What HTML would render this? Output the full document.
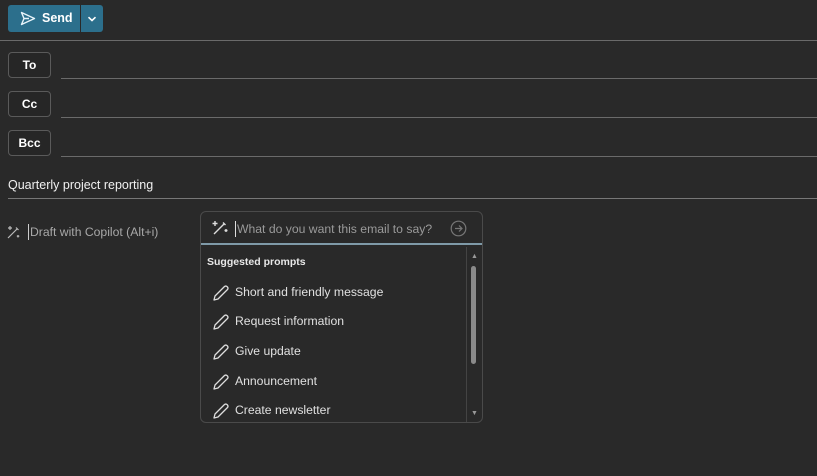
<!DOCTYPE html><html><head><style>
body{margin:0;width:817px;height:476px;background:#292929;font-family:"Liberation Sans",sans-serif;color:#e8e8e8;position:relative;overflow:hidden}
.a{position:absolute}
.btn{position:absolute;left:8px;width:43px;height:25px;border:1px solid #5a5a5a;border-radius:4px;box-sizing:border-box;font-size:12px;font-weight:bold;text-align:center;line-height:24px;color:#fff;background:#262626}
.ln{position:absolute;height:1px;background:#6a6a6a}
.it{position:absolute;left:235px;font-size:12.2px;color:#e0e0e0}
.pen{position:absolute;left:212px}
</style></head><body>
<div class="a" style="left:8px;top:5px;width:72px;height:27px;background:#2c6f8c;border-radius:3px 0 0 3px"></div>
<div class="a" style="left:81px;top:5px;width:22px;height:27px;background:#2c6f8c;border-radius:0 3px 3px 0"></div>
<svg class="a" style="left:20px;top:11px" width="16" height="15" viewBox="0 0 16 15"><path d="M1.5 1.5L14.5 7.5L1.5 13.5L4 7.5Z M4 7.5H9" fill="none" stroke="#e8f4fa" stroke-width="1.4" stroke-linejoin="round"/></svg>
<div class="a" style="left:42px;top:11px;font-size:12.5px;font-weight:bold;color:#fff">Send</div>
<svg class="a" style="left:87px;top:16px" width="10" height="6"><path d="M1.5 1.2L5 4.5L8.5 1.2" fill="none" stroke="#fff" stroke-width="1.6"/></svg>
<div class="ln" style="left:0;top:40px;width:817px"></div>
<div class="btn" style="top:52px;height:26px">To</div>
<div class="ln" style="left:61px;top:78px;width:756px"></div>
<div class="btn" style="top:91px;height:26px">Cc</div>
<div class="ln" style="left:61px;top:117px;width:756px"></div>
<div class="btn" style="top:130px;height:26px">Bcc</div>
<div class="ln" style="left:61px;top:156px;width:756px"></div>
<div class="a" style="left:8px;top:178px;font-size:12.5px;color:#f0f0f0">Quarterly project reporting</div>
<div class="ln" style="left:8px;top:198px;width:809px;background:#777"></div>
<svg class="a" style="left:6px;top:224px" width="16" height="16" viewBox="0 0 16 16"><path d="M2 14L11 5M10 3.5l2.5 2.5M4 2v4M2 4h4M12 11v2.5M10.8 12.2h2.5" stroke="#bbb" stroke-width="1.2" fill="none"/></svg>
<div class="a" style="left:28px;top:224px;width:1px;height:16px;background:#ccc"></div>
<div class="a" style="left:30px;top:225px;font-size:12.2px;color:#a8a8a8">Draft with Copilot (Alt+i)</div>
<div class="a" style="left:200px;top:211px;width:283px;height:212px;box-sizing:border-box;border:1px solid #4a4a4a;border-radius:6px;background:#292929"></div>
<div class="a" style="left:201px;top:243px;width:281px;height:2px;background:#7f9aa8"></div>
<svg class="a" style="left:211px;top:219px" width="18" height="18" viewBox="0 0 18 18"><path d="M3 15L13 5M12 3.5l2.5 2.5M4 2v5M1.5 4.5h5M15 10v3M13.5 11.5h3" stroke="#ddd" stroke-width="1.4" fill="none"/></svg>
<div class="a" style="left:235px;top:221px;width:1px;height:16px;background:#ddd"></div>
<div class="a" style="left:237px;top:222px;font-size:12.2px;color:#9a9a9a">What do you want this email to say?</div>
<svg class="a" style="left:450px;top:220px" width="17" height="17" viewBox="0 0 17 17"><circle cx="8.5" cy="8.5" r="7.3" fill="none" stroke="#777" stroke-width="1.2"/><path d="M5 8.5h7M9 5.5l3 3-3 3" fill="none" stroke="#777" stroke-width="1.2"/></svg>
<div class="a" style="left:207px;top:256px;font-size:10.5px;font-weight:bold;color:#e8e8e8">Suggested prompts</div>
<div class="a" style="left:466px;top:247px;width:1px;height:175px;background:#444"></div>
<div class="a" style="left:471px;top:266px;width:5px;height:98px;background:#8a8a8a;border-radius:3px"></div>
<div class="a" style="left:471px;top:253px;font-size:7px;color:#999">▲</div>
<div class="a" style="left:471px;top:410px;font-size:7px;color:#999">▼</div>
<div class="it" style="top:285px">Short and friendly message</div>
<div class="it" style="top:314px">Request information</div>
<div class="it" style="top:344px">Give update</div>
<div class="it" style="top:374px">Announcement</div>
<div class="it" style="top:403px">Create newsletter</div>
<svg width="0" height="0" style="position:absolute"><defs><path id="p" d="M2 16L3 12L12.5 2.5Q14 1.5 15.5 3Q16.5 4.5 15.5 5.5L6 15Z" fill="none" stroke="#ddd" stroke-width="1.3" stroke-linejoin="round"/></defs></svg>
<svg class="pen" style="top:284px" width="18" height="18"><use href="#p"/></svg>
<svg class="pen" style="top:313px" width="18" height="18"><use href="#p"/></svg>
<svg class="pen" style="top:343px" width="18" height="18"><use href="#p"/></svg>
<svg class="pen" style="top:373px" width="18" height="18"><use href="#p"/></svg>
<svg class="pen" style="top:402px" width="18" height="18"><use href="#p"/></svg>
</body></html>
